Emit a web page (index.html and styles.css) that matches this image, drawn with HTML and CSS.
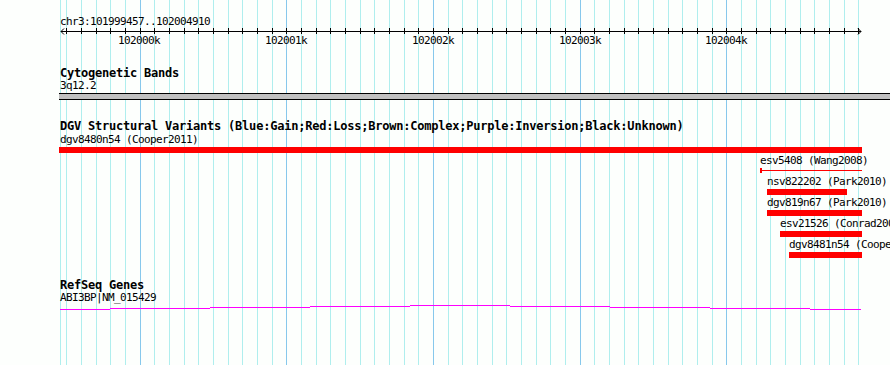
FILE: index.html
```html
<!DOCTYPE html>
<html>
<head>
<meta charset="utf-8">
<link rel="stylesheet" href="styles.css">
</head>
<body>
<div class="canvas">
  <div class="grid">
    <div class="gl" style="left:60px"></div>
    <div class="gl" style="left:66px"></div><div class="gl" style="left:81px"></div><div class="gl" style="left:96px"></div><div class="gl" style="left:110px"></div><div class="gl" style="left:125px"></div>
    <div class="gl major" style="left:140px"></div><div class="gl" style="left:154px"></div><div class="gl" style="left:169px"></div><div class="gl" style="left:184px"></div><div class="gl" style="left:198px"></div>
    <div class="gl" style="left:213px"></div><div class="gl" style="left:228px"></div><div class="gl" style="left:242px"></div><div class="gl" style="left:257px"></div><div class="gl" style="left:272px"></div>
    <div class="gl major" style="left:286px"></div><div class="gl" style="left:301px"></div><div class="gl" style="left:316px"></div><div class="gl" style="left:330px"></div><div class="gl" style="left:345px"></div>
    <div class="gl" style="left:360px"></div><div class="gl" style="left:374px"></div><div class="gl" style="left:389px"></div><div class="gl" style="left:404px"></div><div class="gl" style="left:418px"></div>
    <div class="gl major" style="left:433px"></div><div class="gl" style="left:448px"></div><div class="gl" style="left:462px"></div><div class="gl" style="left:477px"></div><div class="gl" style="left:492px"></div>
    <div class="gl" style="left:506px"></div><div class="gl" style="left:521px"></div><div class="gl" style="left:536px"></div><div class="gl" style="left:550px"></div><div class="gl" style="left:565px"></div>
    <div class="gl major" style="left:580px"></div><div class="gl" style="left:594px"></div><div class="gl" style="left:609px"></div><div class="gl" style="left:624px"></div><div class="gl" style="left:638px"></div>
    <div class="gl" style="left:653px"></div><div class="gl" style="left:668px"></div><div class="gl" style="left:682px"></div><div class="gl" style="left:697px"></div><div class="gl" style="left:712px"></div>
    <div class="gl major" style="left:726px"></div><div class="gl" style="left:741px"></div><div class="gl" style="left:756px"></div><div class="gl" style="left:770px"></div><div class="gl" style="left:785px"></div>
    <div class="gl" style="left:800px"></div><div class="gl" style="left:814px"></div><div class="gl" style="left:829px"></div><div class="gl" style="left:844px"></div><div class="gl" style="left:858px"></div>
  </div>

  <div class="ruler">
    <div class="ruler-label">chr3:101999457..102004910</div>
    <svg class="axis" width="803" height="7" viewBox="0 0 803 7" shape-rendering="crispEdges">
      <path d="M2 3.5H802" stroke="#000" stroke-width="1" fill="none"/>
      <path d="M5 0.5L2 3.5L5 6.5M799 0.5L802 3.5L799 6.5" stroke="#000" stroke-width="1" fill="none" shape-rendering="auto"/>
      <path stroke="#000" stroke-width="1" fill="none" d="M7.5 0v6M22.5 0v6M37.5 0v6M51.5 0v6M66.5 0v6M81.5 0v6M95.5 0v6M110.5 0v6M125.5 0v6M139.5 0v6M154.5 0v6M169.5 0v6M183.5 0v6M198.5 0v6M213.5 0v6M227.5 0v6M242.5 0v6M257.5 0v6M271.5 0v6M286.5 0v6M301.5 0v6M315.5 0v6M330.5 0v6M345.5 0v6M359.5 0v6M374.5 0v6M389.5 0v6M403.5 0v6M418.5 0v6M433.5 0v6M447.5 0v6M462.5 0v6M477.5 0v6M491.5 0v6M506.5 0v6M521.5 0v6M535.5 0v6M550.5 0v6M565.5 0v6M579.5 0v6M594.5 0v6M609.5 0v6M623.5 0v6M638.5 0v6M653.5 0v6M667.5 0v6M682.5 0v6M697.5 0v6M711.5 0v6M726.5 0v6M741.5 0v6M755.5 0v6M770.5 0v6M785.5 0v6M799.5 0v6"/>
    </svg>
    <div class="ticks">
      <span class="tick-label" style="left:58px">102000k</span>
      <span class="tick-label" style="left:205px">102001k</span>
      <span class="tick-label" style="left:352px">102002k</span>
      <span class="tick-label" style="left:499px">102003k</span>
      <span class="tick-label" style="left:645px">102004k</span>
    </div>
  </div>

  <section class="track cyto">
    <h2 class="track-title">Cytogenetic Bands</h2>
    <div class="track-label">3q12.2</div>
    <div class="band"></div>
  </section>

  <section class="track dgv">
    <h2 class="track-title">DGV Structural Variants (Blue:Gain;Red:Loss;Brown:Complex;Purple:Inversion;Black:Unknown)</h2>
    <div class="features">
      <div class="feature" style="margin-left:0px">
        <div class="flabel">dgv8480n54 (Cooper2011)</div>
        <div class="fbar" style="margin-left:-1px;width:803px"></div>
      </div>
      <div class="feature" style="margin-left:700px">
        <div class="flabel">esv5408 (Wang2008)</div>
        <div class="fline" style="width:100px"></div>
      </div>
      <div class="feature" style="margin-left:707px">
        <div class="flabel">nsv822202 (Park2010)</div>
        <div class="fbar" style="width:80px"></div>
      </div>
      <div class="feature" style="margin-left:707px">
        <div class="flabel">dgv819n67 (Park2010)</div>
        <div class="fbar" style="width:95px"></div>
      </div>
      <div class="feature" style="margin-left:720px">
        <div class="flabel">esv21526 (Conrad2009)</div>
        <div class="fbar" style="width:82px"></div>
      </div>
      <div class="feature" style="margin-left:729px">
        <div class="flabel">dgv8481n54 (Cooper2011)</div>
        <div class="fbar" style="width:73px"></div>
      </div>
    </div>
  </section>

  <section class="track refseq">
    <h2 class="track-title">RefSeq Genes</h2>
    <div class="track-label">ABI3BP|NM_015429</div>
    <div class="gene">
      <div class="seg" style="left:0px;top:4px;width:50px"></div>
      <div class="seg" style="left:50px;top:3px;width:100px"></div>
      <div class="seg" style="left:150px;top:2px;width:100px"></div>
      <div class="seg" style="left:250px;top:1px;width:100px"></div>
      <div class="seg" style="left:350px;top:0px;width:100px"></div>
      <div class="seg" style="left:450px;top:1px;width:100px"></div>
      <div class="seg" style="left:550px;top:2px;width:100px"></div>
      <div class="seg" style="left:650px;top:3px;width:100px"></div>
      <div class="seg" style="left:750px;top:4px;width:51px"></div>
    </div>
  </section>
</div>
</body>
</html>
```

FILE: styles.css
```css
html, body {
  margin: 0;
  padding: 0;
  background: #fdfffd;
}

.canvas {
  position: relative;
  z-index: 0;
  width: 890px;
  height: 365px;
  overflow: hidden;
  background: #fdfffd;
  color: #000;
  font-family: "DejaVu Sans Mono", "Liberation Mono", monospace;
  font-size: 11px;
  letter-spacing: -0.62px;
  line-height: 12px;
}

.grid {
  position: absolute;
  inset: 0;
  z-index: -1;
}

.gl {
  position: absolute;
  top: 0;
  bottom: 0;
  width: 1px;
  background: #afeeee;
}

.gl.major {
  background: #87c8ec;
}

.ruler {
  height: 60px;
  box-sizing: border-box;
  padding-top: 16px;
  padding-left: 60px;
}

.ruler-label {
  height: 12px;
  white-space: nowrap;
}

.axis {
  display: block;
  margin-left: -1px;
}

.ticks {
  position: relative;
  height: 12px;
}

.tick-label {
  position: absolute;
  top: 0;
  white-space: nowrap;
}

.track {
  padding-left: 60px;
}

.track-title {
  margin: 0;
  font-size: 12px;
  letter-spacing: -0.22px;
  line-height: 13px;
  font-weight: bold;
  white-space: nowrap;
}

.cyto .track-title {
  margin-top: 7px;
}

.dgv .track-title {
  margin-top: 20px;
}

.refseq .track-title {
  margin-top: 19px;
}

.track-label {
  height: 12px;
  white-space: nowrap;
}

.band {
  margin-top: 1px;
  margin-left: -1px;
  height: 5px;
  background: #c0c0c0;
  border-top: 1px solid #000;
  border-bottom: 1px solid #000;
}

.features {
  margin-top: 1px;
}

.feature {
  height: 21px;
}

.flabel {
  height: 12px;
  white-space: nowrap;
}

.fbar {
  margin-top: 1px;
  height: 6px;
  background: #ff0000;
}

.fline {
  margin-top: 1px;
  height: 5px;
  border-left: 2px solid #ff0000;
  background: linear-gradient(#ff0000, #ff0000) 0 2px / 100% 1px no-repeat;
}

.gene {
  position: relative;
  margin-top: 1px;
  height: 5px;
}

.seg {
  position: absolute;
  height: 1px;
  background: #ff00ff;
}
```
